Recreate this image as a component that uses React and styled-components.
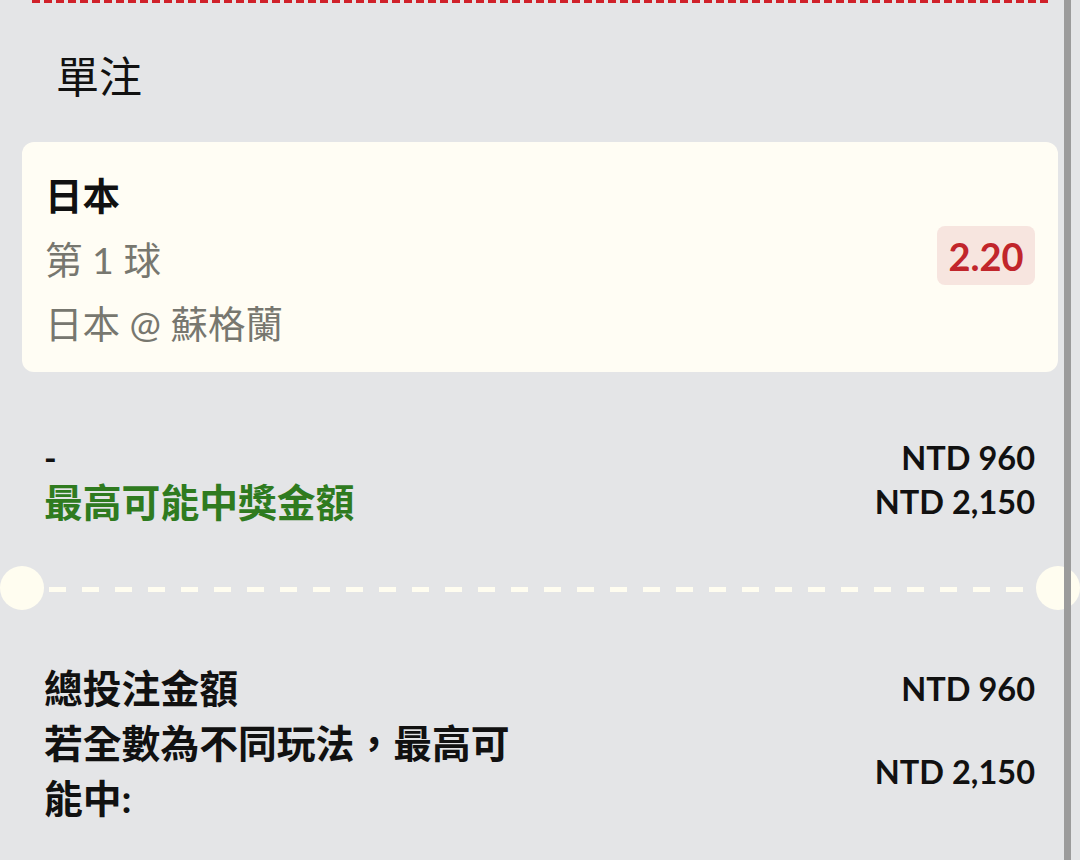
import React from "react";
import styled, { createGlobalStyle } from "styled-components";

const Global = createGlobalStyle`
  html, body { margin: 0; padding: 0; background: #e4e5e7; }
  body { font-family: Lato, "Noto Sans CJK TC", "Noto Sans", sans-serif; }
`;

const Page = styled.div`
  position: relative;
  width: 1080px;
  height: 860px;
  overflow: hidden;
  background: #e4e5e7;
  color: #111;
  font-family: Lato, "Noto Sans CJK TC", sans-serif;
`;

const TopEdge = styled.div`
  margin: 0 32px;
  height: 3px;
  background: repeating-linear-gradient(90deg, #d0202a 0 8px, transparent 8px 12px);
`;

const Title = styled.h2`
  margin: 49px 0 40px 56px;
  font-size: 43px;
  line-height: 50px;
  font-weight: 400;
  color: #111;
`;

const Card = styled.div`
  margin: 0 22px;
  height: 230px;
  box-sizing: border-box;
  padding: 22px 23px 16px 23px;
  background: #fffdf4;
  border-radius: 12px;
  display: flex;
  align-items: center;
  justify-content: space-between;
`;

const CardInfo = styled.div`
  display: flex;
  flex-direction: column;
  align-self: stretch;
`;

const CardLine = styled.div`
  font-size: 37.5px;
  line-height: 64px;
  font-weight: ${p => (p.$strong ? 700 : 400)};
  color: ${p => (p.$strong ? "#111" : "#77776f")};
  white-space: pre;
`;

const Odds = styled.div`
  height: 59px;
  min-width: 98px;
  box-sizing: border-box;
  padding: 0 10px;
  margin-bottom: 9px;
  display: flex;
  align-items: center;
  justify-content: center;
  border-radius: 8px;
  background: #f7e5df;
  color: #c1262b;
  font-size: 38px;
  font-weight: 700;
`;

const Section = styled.div`
  padding: ${p => p.$pad};
  display: flex;
  flex-direction: column;
`;

const Row = styled.div`
  display: flex;
  justify-content: space-between;
  align-items: center;
  padding: 0 45px 0 44px;
`;

const Label = styled.div`
  font-size: ${p => (p.$dash ? "34px" : "38.8px")};
  line-height: ${p => p.$lh};
  font-weight: 700;
  color: ${p => (p.$green ? "#2f7b1f" : "#111")};
  max-width: 485px;
`;

const Amount = styled.div`
  font-size: 32.5px;
  line-height: ${p => p.$lh};
  font-weight: 700;
  color: #111;
  white-space: nowrap;
`;

const Divider = styled.div`
  position: relative;
  height: 44px;
  margin: 42px 0 51px;
  display: flex;
  align-items: center;
`;

const Notch = styled.div`
  width: 44px;
  height: 44px;
  border-radius: 50%;
  background: #fffdf0;
  flex: none;
`;

const DashLine = styled.div`
  flex: 1;
  height: 5px;
  margin: 3px 5px 0;
  background: repeating-linear-gradient(90deg, #fffdf0 0 17px, transparent 17px 33px);
`;

const ScrollBar = styled.div`
  position: absolute;
  top: 0;
  bottom: 0;
  left: 1064px;
  width: 7px;
  background: #9b9b9b;
`;

export default function App() {
  return (
    <Page>
      <Global />
      <TopEdge />
      <Title>單注</Title>
      <Card>
        <CardInfo>
          <CardLine $strong>日本</CardLine>
          <CardLine>第 1 球</CardLine>
          <CardLine>日本 @ 蘇格蘭</CardLine>
        </CardInfo>
        <Odds>2.20</Odds>
      </Card>
      <Section $pad="64px 0 0">
        <Row>
          <Label $dash $lh="44px">-</Label>
          <Amount $lh="44px">NTD 960</Amount>
        </Row>
        <Row>
          <Label $green $lh="44px">最高可能中獎金額</Label>
          <Amount $lh="44px">NTD 2,150</Amount>
        </Row>
      </Section>
      <Divider>
        <Notch />
        <DashLine />
        <Notch />
      </Divider>
      <Section $pad="0">
        <Row>
          <Label $lh="55px">總投注金額</Label>
          <Amount $lh="55px">NTD 960</Amount>
        </Row>
        <Row>
          <Label $lh="55px">若全數為不同玩法，最高可能中:</Label>
          <Amount $lh="55px">NTD 2,150</Amount>
        </Row>
      </Section>
      <ScrollBar />
    </Page>
  );
}
